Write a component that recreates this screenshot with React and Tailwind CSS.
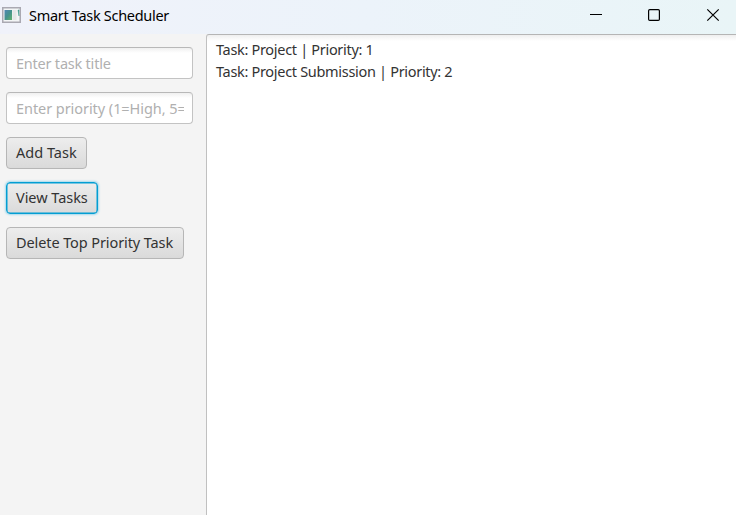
function AppIcon() {
  return (
    <svg width="19" height="16" viewBox="0 0 19 16" className="shrink-0">
      <defs>
        <linearGradient id="pane" x1="0" y1="0" x2="1" y2="1">
          <stop offset="0" stopColor="#5087b5" />
          <stop offset="0.5" stopColor="#43928e" />
          <stop offset="1" stopColor="#63b26b" />
        </linearGradient>
      </defs>
      <rect x="0.75" y="0.75" width="17.5" height="14.5" fill="#f3f5f6" stroke="#aaa9b2" strokeWidth="1.5" />
      <rect x="2.5" y="3" width="7.5" height="10" fill="url(#pane)" />
      <rect x="10.5" y="3" width="4" height="10" fill="#e4e7e6" />
      <path d="M16 3h1v6z" fill="#3f9a8b" stroke="#3f9a8b" strokeWidth="0.5" />
    </svg>
  );
}

function TitleBar() {
  return (
    <header className="flex h-[34px] shrink-0 items-start bg-linear-to-r from-[#f0f2fa] via-[#ecf3fa] to-[#e9f5f7] pl-[2px] text-black">
      <div className="flex grow items-center gap-2 pt-[7px]">
        <AppIcon />
        <h1 className="text-[14.5px] leading-4 tracking-[-0.3px] whitespace-nowrap">Smart Task Scheduler</h1>
      </div>
      <svg width="160" height="34" viewBox="0 0 160 34" fill="none" stroke="#000" className="shrink-0">
        <path d="M14 14.5h12" />
        <rect x="72.6" y="9.6" width="10.8" height="10.8" rx="1.2" strokeWidth="1.2" />
        <path d="M131.3 9.3l11.4 11.4M142.7 9.3l-11.4 11.4" strokeWidth="1.2" />
      </svg>
    </header>
  );
}

const fieldClass =
  "block h-8 w-[187px] rounded-[4px] border border-[#c3c3c3] border-t-[#b8b8b8] bg-linear-to-b from-[#f0f0f0] via-white via-[5px] to-white pl-[9px] pr-[8px] text-[14.5px] text-[#333] outline-none placeholder:text-[#b0b0b0] placeholder:opacity-100";

const buttonClass =
  "h-8 rounded-[4px] border bg-linear-to-b from-[#ededed] to-[#dadada] px-[9px] pb-px text-left text-[14.5px] text-[#333] whitespace-nowrap";

export default function App() {
  return (
    <div className="flex h-[515px] w-[736px] flex-col overflow-hidden bg-[#f4f4f4] font-['Noto_Sans','Open_Sans',sans-serif]">
      <TitleBar />
      <main className="flex min-h-0 grow">
        <aside className="flex w-[206px] shrink-0 flex-col items-start gap-[13px] pt-[13px] pl-[6px]">
          <input className={`${fieldClass} tracking-[-0.22px]`} placeholder="Enter task title" />
          <input className={`${fieldClass} tracking-[-0.06px]`} placeholder="Enter priority (1=High, 5=Low)" />
          <button className={`${buttonClass} w-[81px] border-[#b6b6b6] tracking-[0.02px]`}>Add Task</button>
          <button className={`${buttonClass} w-[92px] border-[#039ed3] tracking-[-0.04px] shadow-[inset_0_0_0_0.5px_#039ed3,0_0_2px_1px_#a5d9ec]`}>
            View Tasks
          </button>
          <button className={`${buttonClass} w-[178px] border-[#b6b6b6] tracking-[-0.1px]`}>Delete Top Priority Task</button>
        </aside>
        <section className="grow rounded-tl-[3px] border-t border-l border-t-[#b5b5b5] border-l-[#c0c0c0] bg-linear-to-b from-[#efefef] via-white via-[6px] to-white pt-[3px] pl-[9px] text-[14.5px] leading-[22px] tracking-[-0.31px] whitespace-nowrap text-[#333]">
          <p>Task: Project | Priority: 1</p>
          <p>Task: Project Submission | Priority: 2</p>
        </section>
      </main>
    </div>
  );
}
